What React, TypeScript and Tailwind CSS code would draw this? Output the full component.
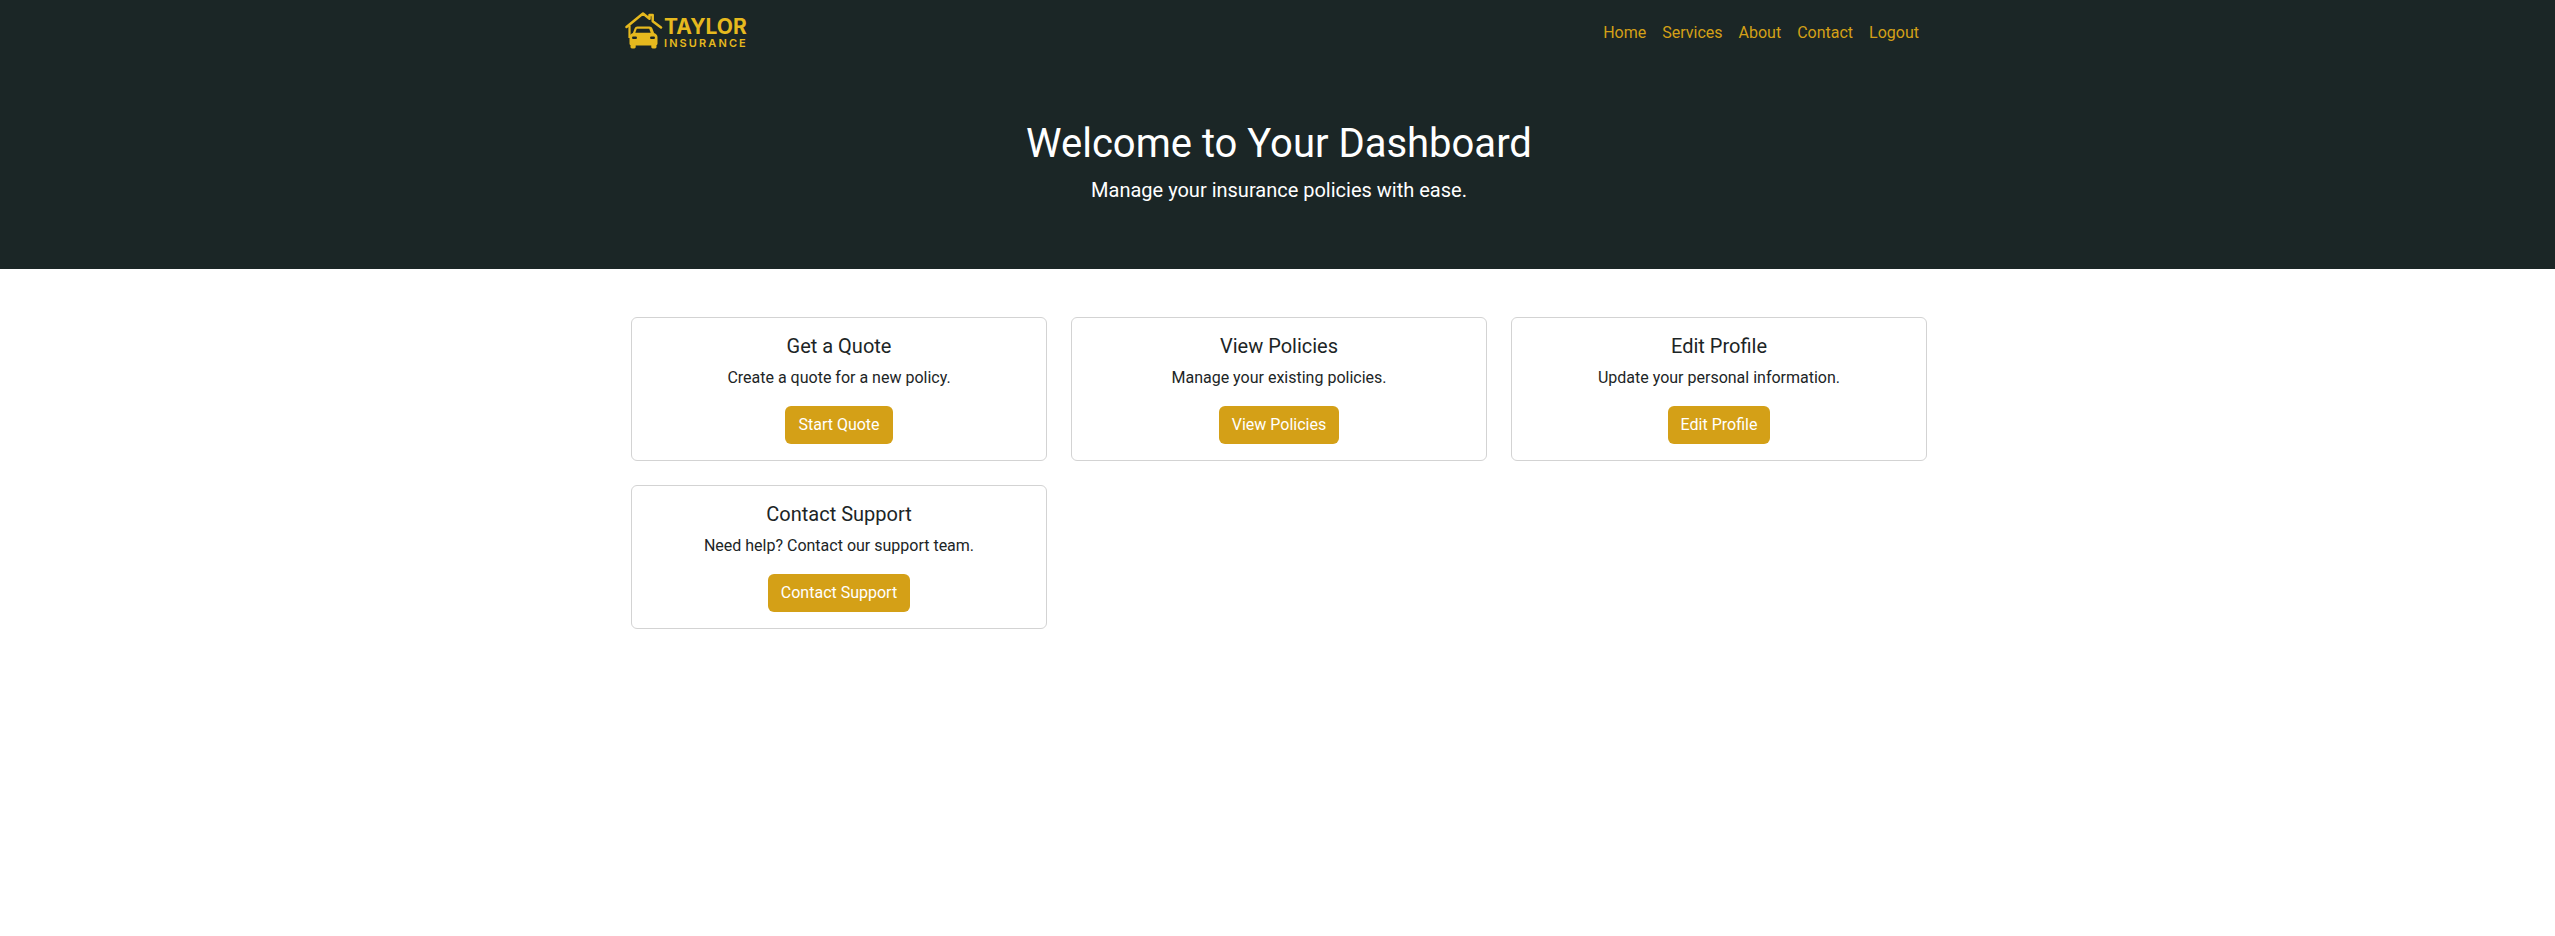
const GOLD = '#E6B91E';

const cards = [
  { title: 'Get a Quote', text: 'Create a quote for a new policy.', action: 'Start Quote' },
  { title: 'View Policies', text: 'Manage your existing policies.', action: 'View Policies' },
  { title: 'Edit Profile', text: 'Update your personal information.', action: 'Edit Profile' },
  { title: 'Contact Support', text: 'Need help? Contact our support team.', action: 'Contact Support' },
];

const links = ['Home', 'Services', 'About', 'Contact', 'Logout'];

function Logo() {
  return (
    <div className="flex items-start gap-[1px]">
      <svg width="38" height="37" viewBox="0 0 38 37" fill="none">
        {/* roof, chimney, left wall */}
        <path d="M1.500 15 18 1.500l6.500 5.300V3h3.200v6.300L36 15.500" stroke={GOLD} strokeWidth="2.500" strokeLinejoin="round" strokeLinecap="round" />
        <path d="M4.500 13.500V26" stroke={GOLD} strokeWidth="2.200" />
        {/* car */}
        <path
          d="M11.500 14.500h13c1.400 0 2.400.7 2.900 2l1.700 4.400c2.200.8 3.400 2.200 3.400 4.300v6.300c0 .9-.4 1.400-1 1.600v2c0 .8-.6 1.400-1.400 1.400h-2.400c-.8 0-1.400-.6-1.400-1.400v-1.600H10.700v1.600c0 .8-.6 1.400-1.400 1.400H6.900c-.8 0-1.400-.6-1.400-1.400v-2c-.6-.2-1-.7-1-1.600v-6.300c0-2.100 1.200-3.500 3.400-4.300l1.700-4.400c.5-1.300 1.300-2 2.900-2z"
          fill={GOLD}
        />
        <path d="M11.800 16.800h12.400l1.500 4H10.300z" fill="#1B2626" />
        <rect x="7" y="24.500" width="5" height="2.400" rx="1.200" fill="#1B2626" />
        <rect x="25" y="24.500" width="5" height="2.400" rx="1.200" fill="#1B2626" />
      </svg>
      <div className="flex flex-col pt-[4px] font-['Inter',sans-serif] text-[#E6B91E]">
        <span className="text-[21px] leading-[21px] font-bold">TAYLOR</span>
        <span className="mt-[1px] text-[11px] leading-[11px] font-semibold tracking-[2.100px]">INSURANCE</span>
      </div>
    </div>
  );
}

export default function App() {
  return (
    <div className="min-h-[936px] bg-white font-['Roboto',sans-serif] text-[#1c2526]">
      <header className="bg-[#1b2626] text-white">
        <nav className="ml-[619px] flex h-[71px] w-[1320px] items-start justify-between pl-[6px] pr-[12px]">
          <div className="pt-[12px]">
            <Logo />
          </div>
          <ul className="flex pt-[21px]">
            {links.map((label) => (
              <li key={label}>
                <a href="#" className="block px-2 text-base leading-6 text-[#d4a017]">
                  {label}
                </a>
              </li>
            ))}
          </ul>
        </nav>
        <div className="pt-[49px] pb-[64px] pl-[3px] text-center">
          <h1 className="mb-[7px] text-[40px] leading-[48px] font-normal">Welcome to Your Dashboard</h1>
          <p className="text-[20px] leading-[30px]">Manage your insurance policies with ease.</p>
        </div>
      </header>

      <main className="ml-[619px] w-[1320px] px-3 pt-12">
        <div className="grid grid-cols-3 gap-6">
          {cards.map(({ title, text, action }) => (
            <div key={title} className="rounded-md border border-[#d3d3d3] p-4 text-center">
              <h5 className="mb-2 text-[20px] leading-6 font-normal">{title}</h5>
              <p className="mb-4 text-base leading-6">{text}</p>
              <a href="#" className="inline-block rounded-md bg-[#d4a017] px-[13px] py-[7px] text-base leading-6 font-[450] text-white">
                {action}
              </a>
            </div>
          ))}
        </div>
      </main>
    </div>
  );
}
